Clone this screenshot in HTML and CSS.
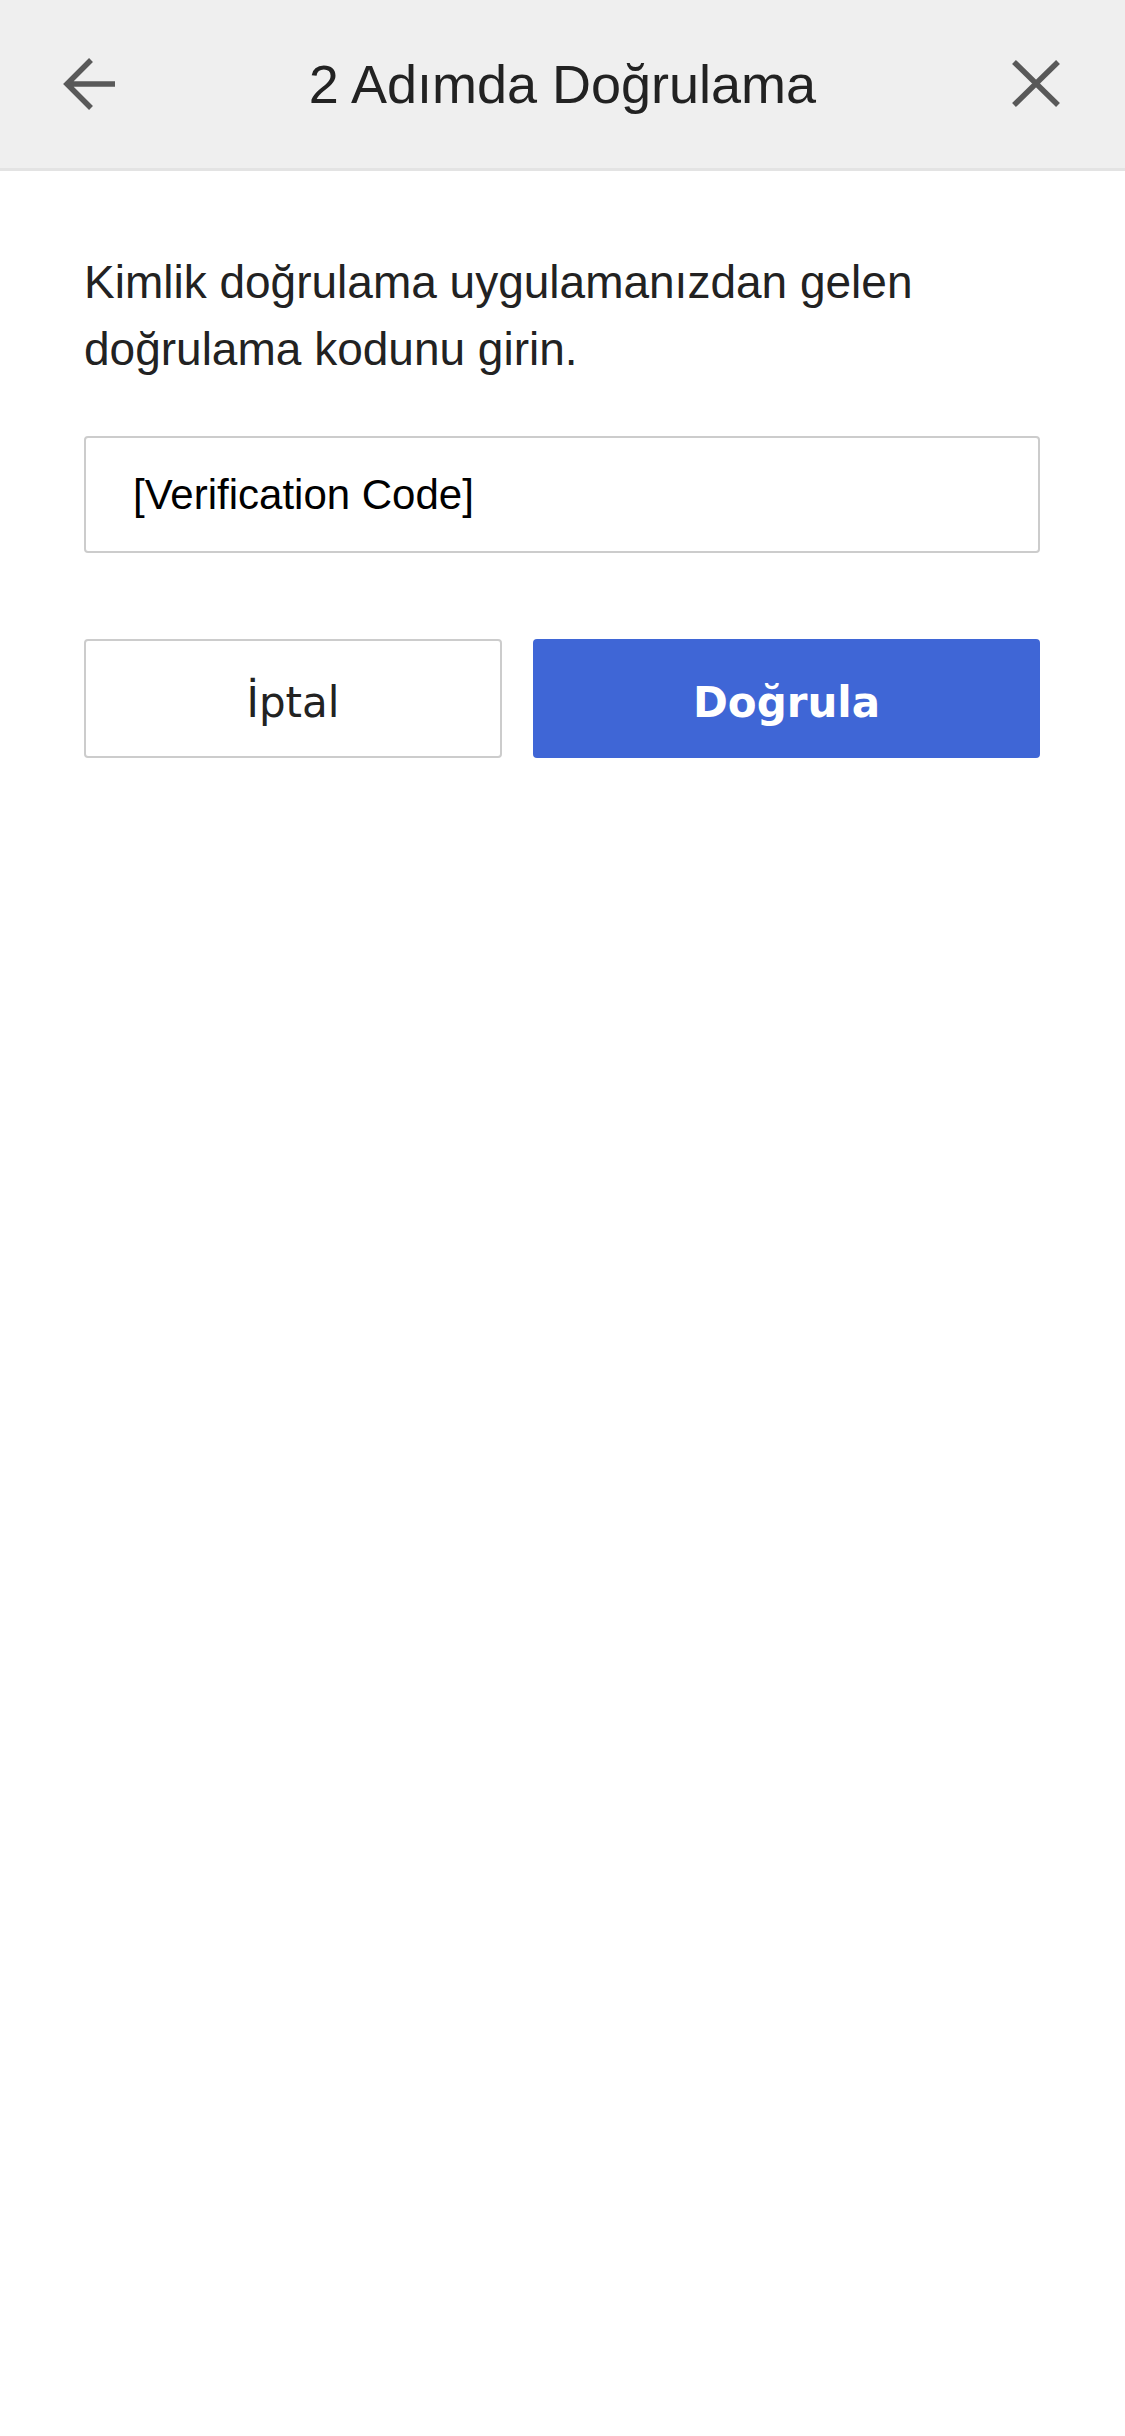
FILE: index.html
```html
<!DOCTYPE html>
<html lang="tr">
<head>
    <meta charset="UTF-8">
    <meta name="viewport" content="width=device-width, initial-scale=1.0">
    <title>2 Adımda Doğrulama</title>
    <link rel="stylesheet" href="styles.css">
</head>
<body>
    <header class="topbar">
        <button class="icon-btn" aria-label="Geri">
            <svg width="52" height="52" viewBox="0 0 52 52">
                <path d="M4 26 H52 M28 2 L4 26 L28 50" fill="none" stroke="#595959" stroke-width="5.5"/>
            </svg>
        </button>
        <h1 class="title">2 Adımda Doğrulama</h1>
        <button class="icon-btn" aria-label="Kapat">
            <svg width="52" height="52" viewBox="0 0 52 52">
                <path d="M4 4 L48 47 M48 4 L4 47" fill="none" stroke="#595959" stroke-width="5.5"/>
            </svg>
        </button>
    </header>

    <main class="content">
        <p class="intro">Kimlik doğrulama uygulamanızdan gelen doğrulama kodunu girin.</p>
        <input class="code-input" type="text" value="[Verification Code]" autocomplete="off">
        <div class="actions">
            <button class="btn btn-cancel">İptal</button>
            <button class="btn btn-verify">Doğrula</button>
        </div>
    </main>
</body>
</html>
```

FILE: styles.css
```css
body {
    margin: 0;
    background-color: #ffffff;
    font-family: "Liberation Sans", Arial, sans-serif;
    color: #222222;
}
.topbar {
    display: flex;
    align-items: center;
    justify-content: space-between;
    height: 168px;
    padding: 0 63px;
    background-color: #efefef;
    border-bottom: 3px solid #e3e3e3;
}
.icon-btn {
    display: flex;
    padding: 0;
    border: none;
    background: none;
    cursor: pointer;
}
.title {
    margin: 0;
    font-size: 54px;
    font-weight: normal;
    color: #222222;
}
.content {
    padding: 78px 85px 0 84px;
}
.intro {
    margin: 0;
    font-size: 46px;
    line-height: 67px;
}
.code-input {
    display: block;
    box-sizing: border-box;
    width: 100%;
    height: 117px;
    margin-top: 53px;
    padding: 0 47px;
    border: 2px solid #cccccc;
    border-radius: 4px;
    font-family: "Liberation Sans", Arial, sans-serif;
    font-size: 42px;
    color: #000000;
    outline: none;
}
.actions {
    display: grid;
    grid-template-columns: 418fr 507fr;
    gap: 31px;
    margin-top: 86px;
}
.btn {
    height: 119px;
    padding: 8px 0 0;
    border-radius: 4px;
    font-family: "DejaVu Sans", Verdana, sans-serif;
    font-size: 42px;
    cursor: pointer;
}
.btn-cancel {
    background-color: #ffffff;
    border: 2px solid #cccccc;
    color: #222222;
}
.btn-verify {
    background-color: #3f66d6;
    border: none;
    color: #ffffff;
    font-weight: bold;
}
```
